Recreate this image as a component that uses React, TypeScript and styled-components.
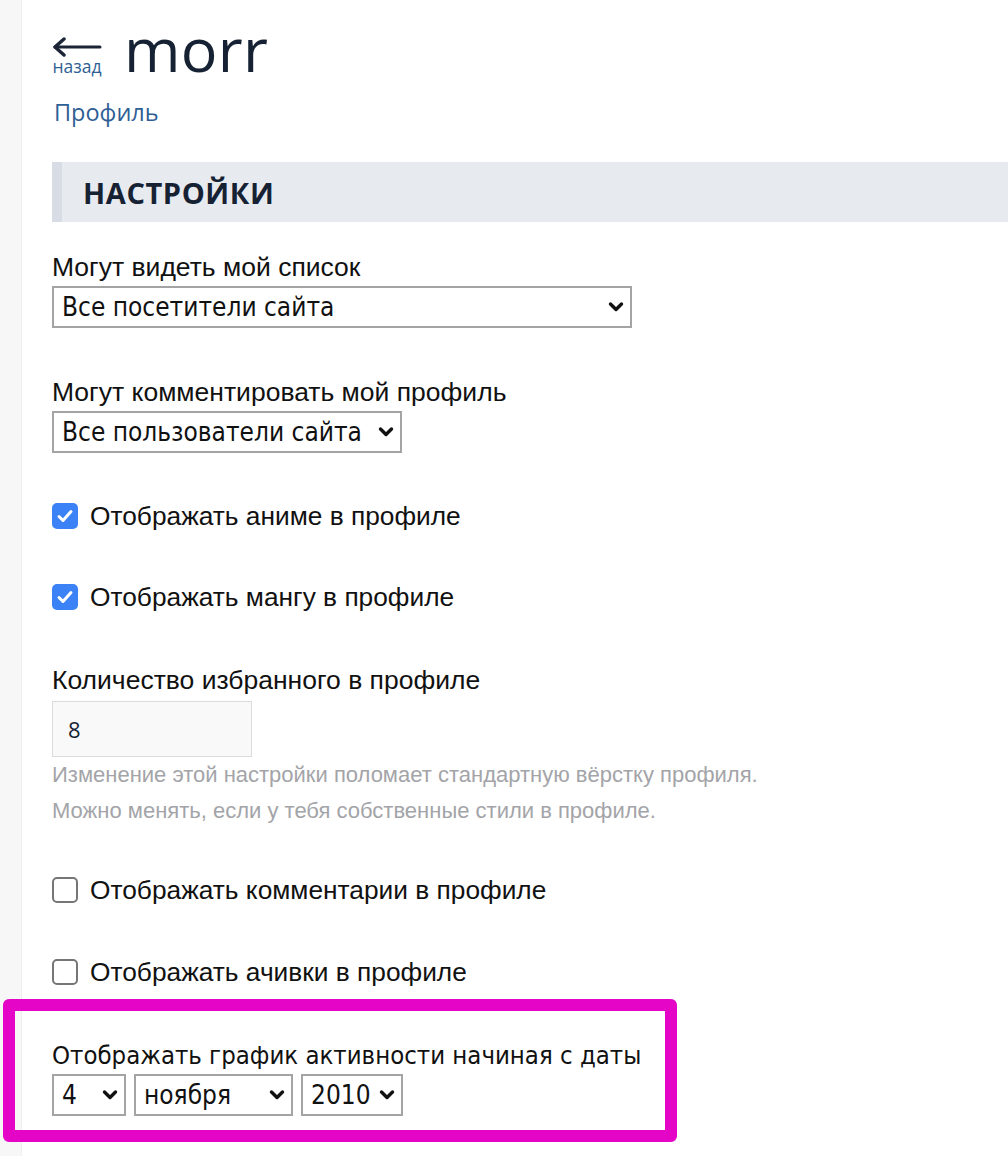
import React from "react";
import styled, { createGlobalStyle } from "styled-components";

const Global = createGlobalStyle`
  html, body { margin: 0; padding: 0; background: #fff; }
  body { font-family: "Liberation Sans", Arial, sans-serif; color: #111; }
  * { box-sizing: border-box; }
`;

const Page = styled.div`
  display: flex;
  min-height: 1156px;
  width: 1008px;
  overflow: hidden;
`;

const Sidebar = styled.div`
  width: 22px;
  flex: none;
  background: #f7f7f8;
  border-right: 1px solid #efeff0;
`;

const Main = styled.main`
  flex: 1;
  padding-left: 30px;
  display: flex;
  flex-direction: column;
`;

const Header = styled.div`
  display: flex;
  align-items: flex-start;
  gap: 22px;
  margin-top: 11px;
`;

const Back = styled.a`
  display: flex;
  flex-direction: column;
  align-items: center;
  width: 50px;
  margin-top: 26px;
  text-decoration: none;
  color: #1b2536;
`;

const BackLabel = styled.span`
  font-family: "Open Sans", sans-serif;
  font-size: 17.5px;
  line-height: 18px;
  color: #2f5f95;
  margin-top: 0px;
`;

const Title = styled.h1`
  margin: 0;
  font-family: "Open Sans", sans-serif;
  font-weight: 400;
  font-size: 61px;
  line-height: 76px;
  color: #162233;
  letter-spacing: 0.3px;
`;

const ProfileLink = styled.a`
  font-family: "Open Sans", sans-serif;
  font-size: 23.5px;
  line-height: 30px;
  color: #2f5f95;
  margin-top: 10px;
  margin-left: 2px;
  text-decoration: none;
`;

const SectionHead = styled.h2`
  margin: 35px 0 0 0;
  height: 60px;
  display: flex;
  align-items: center;
  background: #e7eaef;
  border-left: 10px solid #d8dce5;
  padding-left: 21px;
  font-family: "Open Sans", sans-serif;
  font-weight: 700;
  font-size: 29px;
  letter-spacing: 0.6px;
  color: #162233;
`;

const Field = styled.div<{ $mt: number }>`
  display: flex;
  flex-direction: column;
  align-items: flex-start;
  margin-top: ${(p) => p.$mt}px;
`;

const Label = styled.label<{ $narrow?: boolean }>`
  font-family: ${(p) =>
    p.$narrow
      ? '"Liberation Sans Narrow", "DejaVu Sans Condensed", sans-serif'
      : '"Liberation Sans", Arial, sans-serif'};
  font-size: ${(p) => (p.$narrow ? "25.5px" : "26.5px")};
  line-height: 30px;
  color: #111;
  margin-bottom: 4px;
`;

const SelectWrap = styled.div<{ $w: number }>`
  position: relative;
  width: ${(p) => p.$w}px;
  height: 42px;
  border: 2px solid #a4a4a4;
  background: #fff;
  display: flex;
  align-items: center;
`;

const NativeSelect = styled.select`
  appearance: none;
  -webkit-appearance: none;
  border: none;
  outline: none;
  background: transparent;
  width: 100%;
  height: 100%;
  padding: 0 26px 0 8px;
  font-family: "Liberation Sans Narrow", "DejaVu Sans Condensed", sans-serif;
  font-size: 26px;
  color: #111;
`;

const Chevron = styled.svg`
  position: absolute;
  right: 6px;
  top: 50%;
  transform: translateY(-50%);
  pointer-events: none;
`;

const Row = styled.div`
  display: flex;
  gap: 8px;
`;

const CheckRow = styled.label<{ $mt: number }>`
  display: flex;
  align-items: center;
  gap: 12px;
  height: 30px;
  margin-top: ${(p) => p.$mt}px;
  font-family: "Liberation Sans", Arial, sans-serif;
  font-size: 26.3px;
  color: #111;
`;

const Box = styled.span<{ $on: boolean }>`
  width: 26px;
  height: 26px;
  border-radius: 5px;
  flex: none;
  display: flex;
  align-items: center;
  justify-content: center;
  background: ${(p) => (p.$on ? "#3b82f6" : "#fff")};
  border: ${(p) => (p.$on ? "none" : "2px solid #767676")};
`;

const NumberInput = styled.input`
  width: 200px;
  height: 56px;
  border: 1px solid #dcdcdc;
  background: #f9f9f9;
  padding: 0 15px;
  font-family: "Open Sans", sans-serif;
  font-size: 22px;
  color: #162233;
  outline: none;
  margin-top: 2px;
`;

const Hint = styled.p`
  margin: 0;
  font-family: "Liberation Sans", Arial, sans-serif;
  font-size: 22px;
  line-height: 36px;
  color: #a3a4a8;
`;

const Highlight = styled.div`
  margin-top: 12px;
  margin-left: -49px;
  width: 674px;
  height: 143px;
  border: 12px solid #e405c6;
  border-radius: 6px;
  padding: 29px 0 0 37px;
`;

const Caret = () => (
  <Chevron width="16" height="12" viewBox="0 0 16 12">
    <path d="M2.5 3 L8 8.5 L13.5 3" fill="none" stroke="#111" strokeWidth="3.4" strokeLinecap="round" strokeLinejoin="round" />
  </Chevron>
);

const Select = ({ w, value }: { w: number; value: string }) => (
  <SelectWrap $w={w}>
    <NativeSelect defaultValue={value}>
      <option>{value}</option>
    </NativeSelect>
    <Caret />
  </SelectWrap>
);

const Tick = () => (
  <svg width="18" height="16" viewBox="0 0 18 16">
    <path d="M3 8.5 L7 12.5 L15 3.5" fill="none" stroke="#fff" strokeWidth="3" strokeLinecap="round" strokeLinejoin="round" />
  </svg>
);

const Check = ({ on, text, mt }: { on: boolean; text: string; mt: number }) => (
  <CheckRow $mt={mt}>
    <Box $on={on}>{on && <Tick />}</Box>
    {text}
  </CheckRow>
);

export default function App() {
  return (
    <Page>
      <Global />
      <Sidebar />
      <Main>
        <Header>
          <Back href="#">
            <svg width="50" height="20" viewBox="0 0 50 20">
              <path d="M3 10 H48" fill="none" stroke="#1b2536" strokeWidth="3" strokeLinecap="round" />
              <path d="M12 2 L3 10 L12 18" fill="none" stroke="#1b2536" strokeWidth="3.4" strokeLinecap="round" strokeLinejoin="round" />
            </svg>
            <BackLabel>назад</BackLabel>
          </Back>
          <Title>morr</Title>
        </Header>
        <ProfileLink href="#">Профиль</ProfileLink>
        <SectionHead>НАСТРОЙКИ</SectionHead>

        <Field $mt={30}>
          <Label>Могут видеть мой список</Label>
          <Select w={580} value="Все посетители сайта" />
        </Field>

        <Field $mt={49}>
          <Label>Могут комментировать мой профиль</Label>
          <Select w={350} value="Все пользователи сайта" />
        </Field>

        <Check on mt={48} text="Отображать аниме в профиле" />
        <Check on mt={51} text="Отображать мангу в профиле" />

        <Field $mt={53}>
          <Label>Количество избранного в профиле</Label>
          <NumberInput defaultValue="8" />
          <Hint>Изменение этой настройки поломает стандартную вёрстку профиля.</Hint>
          <Hint>Можно менять, если у тебя собственные стили в профиле.</Hint>
        </Field>

        <Check on={false} mt={46} text="Отображать комментарии в профиле" />
        <Check on={false} mt={52} text="Отображать ачивки в профиле" />

        <Highlight>
          <Field $mt={0}>
            <Label $narrow>Отображать график активности начиная с даты</Label>
            <Row>
              <Select w={74} value="4" />
              <Select w={159} value="ноября" />
              <Select w={102} value="2010" />
            </Row>
          </Field>
        </Highlight>
      </Main>
    </Page>
  );
}
